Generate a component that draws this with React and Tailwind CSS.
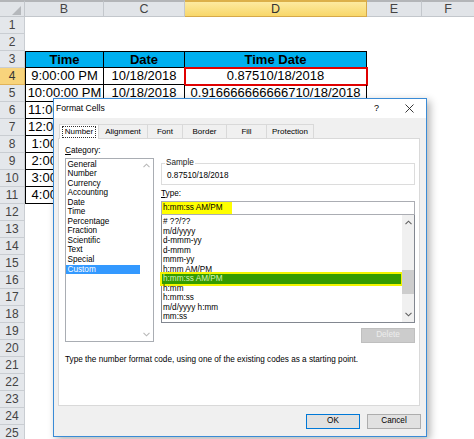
import React from "react";

const bVals = {
  4: "9:00:00 PM",
  5: "10:00:00 PM",
  6: "11:00:00 PM",
  7: "12:00:00 AM",
  8: "1:00:00 AM",
  9: "2:00:00 AM",
  10: "3:00:00 AM",
  11: "4:00:00 AM",
};
const cVals = { 4: "10/18/2018", 5: "10/18/2018" };
const dVals = { 4: "0.87510/18/2018", 5: "0.916666666666710/18/2018" };

function ChevUp({ c = "#606060" }) {
  return (
    <svg width="7" height="5" viewBox="0 0 7 5">
      <polyline points="0.5,4.2 3.5,1.2 6.5,4.2" fill="none" stroke={c} strokeWidth="1.1" />
    </svg>
  );
}
function ChevDown({ c = "#606060" }) {
  return (
    <svg width="7" height="5" viewBox="0 0 7 5">
      <polyline points="0.5,0.8 3.5,3.8 6.5,0.8" fill="none" stroke={c} strokeWidth="1.1" />
    </svg>
  );
}

function Row({ n }) {
  const inTable = n >= 3 && n <= 11;
  const hdr = n === 3;
  const tb = inTable ? "border-r border-b border-black" : "";
  const top = hdr ? "border-t border-black" : "";
  const fill = hdr ? "bg-[#00b0f0] font-bold" : "";
  return (
    <div className="flex h-[17px]">
      <div
        className={
          "w-[25px] shrink-0 flex items-center justify-center border-b border-r text-[12px] " +
          (n === 4
            ? "bg-[#f8d47c] border-[#e0b35a] text-[#333]"
            : "bg-[#e4e7eb] border-[#c9cdd2] text-[#444]")
        }
      >
        {n}
      </div>
      <div className={"w-[79px] shrink-0 flex items-center justify-center whitespace-nowrap " + (inTable ? "border-l border-black " : "") + tb + " " + top + " " + fill}>
        {hdr ? "Time" : bVals[n] || ""}
      </div>
      <div className={"w-[81px] shrink-0 flex items-center justify-center whitespace-nowrap " + tb + " " + top + " " + fill}>
        {hdr ? "Date" : cVals[n] || ""}
      </div>
      <div
        className={
          "w-[182px] shrink-0 flex items-center justify-center whitespace-nowrap " +
          tb + " " + top + " " + fill +
          (n === 4 ? " outline-2 outline-[#e00000] -outline-offset-1" : "")
        }
      >
        {hdr ? "Time Date" : dVals[n] || ""}
      </div>
      <div className="w-[55px] shrink-0" />
      <div className="flex-1" />
    </div>
  );
}

function Sheet() {
  const rows = [];
  for (let i = 1; i <= 25; i++) rows.push(<Row key={i} n={i} />);
  return (
    <div className="font-['Liberation_Sans',Arial,sans-serif] text-[13px] text-black">
      <div className="flex h-[17px] text-[12.5px] text-[#444]">
        <div className="w-[25px] shrink-0 bg-[#e1e4e8] border-t-2 border-t-[#b3b5b8] border-r border-b border-[#c3c7cc] flex items-end justify-end pr-[3px] pb-[1px]">
          <svg width="9" height="9" viewBox="0 0 9 9">
            <polygon points="9,0 9,9 0,9" fill="#b5b8bc" />
          </svg>
        </div>
        <div className="w-[79px] shrink-0 bg-[#e1e4e8] border-t-2 border-t-[#b3b5b8] border-r border-b border-[#c3c7cc] flex items-center justify-center">B</div>
        <div className="w-[81px] shrink-0 bg-[#e1e4e8] border-t-2 border-t-[#b3b5b8] border-r border-b border-[#c3c7cc] flex items-center justify-center">C</div>
        <div className="w-[182px] shrink-0 bg-[linear-gradient(#fdeaa0,#f8d76a)] border-t-2 border-t-[#dcb04a] border-r border-b border-[#d6a94a] flex items-center justify-center text-[#333]">D</div>
        <div className="w-[55px] shrink-0 bg-[#e1e4e8] border-t-2 border-t-[#b3b5b8] border-r border-b border-[#c3c7cc] flex items-center justify-center">E</div>
        <div className="flex-1 bg-[#e1e4e8] border-t-2 border-t-[#b3b5b8] border-b border-[#c3c7cc] flex items-center justify-center">F</div>
      </div>
      {rows}
    </div>
  );
}

const cats = ["General", "Number", "Currency", "Accounting", "Date", "Time", "Percentage", "Fraction", "Scientific", "Text", "Special", "Custom"];
const types = ["# ??/??", "m/d/yyyy", "d-mmm-yy", "d-mmm", "mmm-yy", "h:mm AM/PM", "h:mm:ss AM/PM", "h:mm", "h:mm:ss", "m/d/yyyy h:mm", "mm:ss"];

function Tab({ label, w, sel }) {
  return (
    <div
      className={
        "h-[14px] flex items-center justify-center border-t border-r border-[#d9d9d9] " +
        w +
        (sel ? " bg-white border-l relative -mb-px h-[15px]" : " bg-[#f0f0f0]")
      }
    >
      {sel ? (
        <span className="border border-dotted border-[#333] px-[2px] leading-[10px]">{label}</span>
      ) : (
        label
      )}
    </div>
  );
}

function Dialog() {
  return (
    <div className="absolute left-[53px] top-[98px] w-[374px] h-[339px] border border-[#3a8bd6] bg-[#f0f0f0] shadow-[3px_3px_8px_rgba(0,0,0,0.3)] flex flex-col font-['Liberation_Sans',Arial,sans-serif] text-[8.2px] text-black">
      <div className="h-[19px] shrink-0 bg-white flex items-center pl-[2px] pr-[12px]">
        <span className="text-[8.6px]">Format Cells</span>
        <span className="ml-auto text-[9px] mr-[26px]">?</span>
        <svg width="9" height="9" viewBox="0 0 9 9">
          <line x1="0.5" y1="0.5" x2="8.5" y2="8.5" stroke="#222" strokeWidth="0.9" />
          <line x1="8.5" y1="0.5" x2="0.5" y2="8.5" stroke="#222" strokeWidth="0.9" />
        </svg>
      </div>
      <div className="h-[20px] shrink-0 flex items-end pl-[5px] text-[8px]">
        <Tab label="Number" w="w-[40px]" sel />
        <Tab label="Alignment" w="w-[49px]" />
        <Tab label="Font" w="w-[35px]" />
        <Tab label="Border" w="w-[44px]" />
        <Tab label="Fill" w="w-[40px]" />
        <Tab label="Protection" w="w-[47px]" />
      </div>
      <div className="h-[268px] shrink-0 ml-[4px] mr-[6px] bg-white border border-[#d9d9d9] pt-[5px] pl-[6px] pr-[4px]">
        <div className="flex gap-[7px]">
          <div className="w-[89px] flex flex-col">
            <div className="h-[12px] leading-[12px] pt-[1px]">
              <span className="underline">C</span>ategory:
            </div>
            <div className="mt-[2px] h-[184px] border border-[#a9adb3] flex">
              <div className="flex-1 pt-[0.5px]">
                {cats.map((c) => (
                  <div
                    key={c}
                    className={"h-[9.55px] leading-[9.55px] pl-[1.5px] " + (c === "Custom" ? "bg-[#3399ff] text-white" : "")}
                  >
                    {c}
                  </div>
                ))}
              </div>
              <div className="w-[13px] flex flex-col items-center justify-between py-[4px]">
                <ChevUp c="#b8b8b8" />
                <ChevDown c="#b8b8b8" />
              </div>
            </div>
          </div>
          <div className="w-[254px] flex flex-col">
            <fieldset className="mt-[14px] border border-[#dcdcdc] pl-[5px]">
              <legend className="ml-[-2px] px-[1px] leading-[10px] text-[#222]">Sample</legend>
              <div className="h-[16px] flex items-center">0.87510/18/2018</div>
            </fieldset>
            <div className="mt-[4px] h-[10px] leading-[10px]">
              <span className="underline">T</span>ype:
            </div>
            <div className="mt-[2px] h-[14px] border border-[#abadb3] flex items-stretch">
              <span className="bg-[#ffff00] flex items-center pl-[1px] pr-[9px]">h:mm:ss AM/PM</span>
            </div>
            <div className="h-[108px] border border-t-0 border-[#828790] flex">
              <div className="flex-1 pt-[2px] pr-[1px]">
                {types.map((t) => (
                  <div
                    key={t}
                    className={
                      "h-[9.55px] leading-[9.55px] pl-[1px] " +
                      (t === "h:mm:ss AM/PM" ? "bg-[#349b00] text-[#d8f5b8] ring-2 ring-[#f3f500]" : "")
                    }
                  >
                    {t}
                  </div>
                ))}
              </div>
              <div className="w-[12px] bg-[#f0f0f0] flex flex-col items-center">
                <div className="h-[15px] flex items-center justify-center"><ChevUp /></div>
                <div className="mt-[40px] h-[24px] w-[12px] bg-[#cdcdcd]" />
                <div className="flex-1" />
                <div className="h-[15px] flex items-center justify-center"><ChevDown /></div>
              </div>
            </div>
            <div className="mt-[5px] flex justify-end">
              <div className="w-[54px] h-[15px] bg-[#cccccc] border border-[#bfbfbf] flex items-center justify-center text-[#ececec]">Delete</div>
            </div>
          </div>
        </div>
        <div className="mt-[12px] h-[10px] leading-[10px]">
          Type the number format code, using one of the existing codes as a starting point.
        </div>
      </div>
      <div className="flex justify-end gap-[7px] pt-[8px] pr-[5px]">
        <div className="w-[54px] h-[15px] bg-[#e1e1e1] border border-[#0078d7] flex items-center justify-center">OK</div>
        <div className="w-[54px] h-[15px] bg-[#e1e1e1] border border-[#adadad] flex items-center justify-center">Cancel</div>
      </div>
    </div>
  );
}

export default function App() {
  return (
    <div className="relative w-[474px] h-[439px] overflow-hidden bg-white">
      <Sheet />
      <Dialog />
    </div>
  );
}
